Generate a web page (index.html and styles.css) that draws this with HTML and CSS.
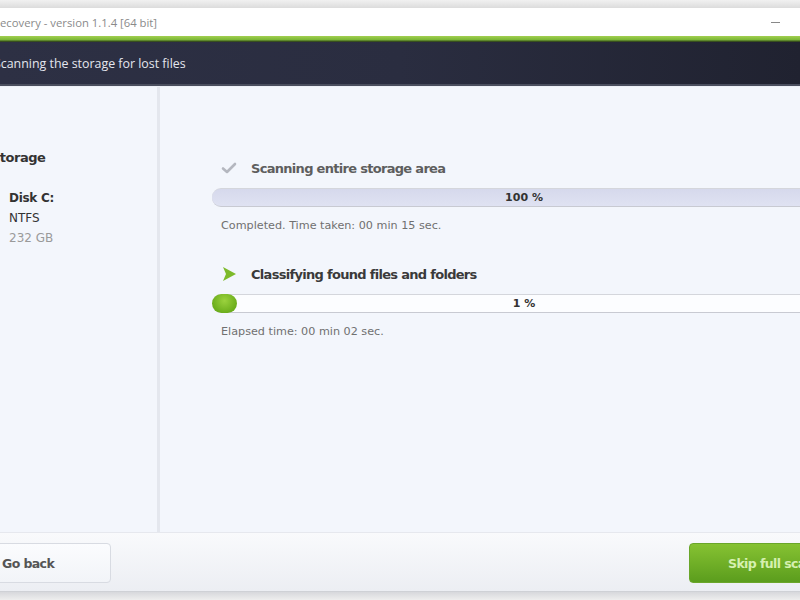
FILE: index.html
```html
<!DOCTYPE html>
<html lang="en">
<head>
  <meta charset="UTF-8">
  <title>Recovery</title>
  <link rel="stylesheet" href="styles.css">
</head>
<body>
  <div id="window">
    <div class="frame-top"></div>

    <div class="titlebar">
      <span class="title">Recovery - version 1.1.4 [64 bit]</span>
      <span class="minimize"></span>
    </div>
    <div class="accent"></div>

    <div class="header">
      <h1>Scanning the storage for lost files</h1>
    </div>

    <div class="main">
      <div class="sidebar">
        <h2>Storage</h2>
        <div class="disk">
          <b>Disk C:</b>
          <span>NTFS</span>
          <span class="size">232 GB</span>
        </div>
      </div>

      <div class="content">
        <div class="step done">
          <div class="step-head">
            <svg class="icon" width="16" height="12" viewBox="0 0 16 12">
              <path d="M2 6.5 L6 10 L14 2" fill="none" stroke="#b4b7bf" stroke-width="2.6" stroke-linecap="round" stroke-linejoin="round"/>
            </svg>
            <h3>Scanning entire storage area</h3>
          </div>
          <div class="bar full"><span>100 %</span></div>
          <p>Completed. Time taken: 00 min 15 sec.</p>
        </div>

        <div class="step active">
          <div class="step-head">
            <svg class="icon" width="16" height="16" viewBox="0 0 16 16">
              <path d="M2 1 L15 8 L2 15 L5 8 Z" fill="#7dba2a"/>
            </svg>
            <h3>Classifying found files and folders</h3>
          </div>
          <div class="bar"><i class="fill"></i><span>1 %</span></div>
          <p>Elapsed time: 00 min 02 sec.</p>
        </div>
      </div>
    </div>

    <div class="footer">
      <button class="btn back">Go back</button>
      <button class="btn skip">Skip full scan</button>
    </div>
    <div class="frame-bottom"></div>
  </div>
</body>
</html>
```

FILE: styles.css
```css
*{
  margin: 0;
  padding: 0;
  box-sizing: border-box;
}

body{
  width: 800px;
  height: 600px;
  overflow: hidden;
  background: #e9e9ea;
  font-family: "DejaVu Sans", Verdana, sans-serif;
}

#window{
  display: flex;
  flex-direction: column;
  height: 600px;
}

.frame-top{
  height: 8px;
  background: linear-gradient(#f1f1f1, #dcdcdc);
}

.titlebar{
  height: 28px;
  background: #fff;
  display: flex;
  align-items: center;
  justify-content: space-between;
  padding: 0 20px 0 0;
}
.title{
  margin-left: -7px;
  font-family: "Open Sans", sans-serif;
  font-size: 11.3px;
  color: #8a8a8a;
}
.minimize{
  width: 9px;
  height: 1px;
  background: #888;
}

.accent{
  height: 6px;
  background: linear-gradient(#a3d050, #7db837 60%, #263318);
}

.header{
  height: 44px;
  display: flex;
  align-items: center;
  background: linear-gradient(90deg, #2d3044, #2a2d40 50%, #202230);
  border-bottom: 2px solid #4a4e5e;
}
.header h1{
  margin-left: -6px;
  padding-top: 1px;
  font-family: "Open Sans", sans-serif;
  font-weight: normal;
  font-size: 12.4px;
  color: #e4e6ee;
}

.main{
  flex: 1;
  display: flex;
  background: #f3f6fc;
  border-top: 1px solid #eceff6;
}

.sidebar{
  width: 160px;
  flex-shrink: 0;
  border-right: 3px solid #e4e7ee;
  padding-top: 63px;
}
.sidebar h2{
  margin-left: -9px;
  font-size: 13px;
  font-weight: bold;
  color: #333;
  letter-spacing: -0.5px;
}
.disk{
  display: flex;
  flex-direction: column;
  gap: 5px;
  margin: 26px 0 0 9px;
  font-size: 12px;
  line-height: 15px;
  color: #333;
}
.disk b{
  color: #333;
  letter-spacing: -0.3px;
}
.disk .size{
  color: #9a9a9a;
}

.content{
  flex: 1;
  padding: 71px 0 0 52px;
  min-width: 0;
}

.step{
  width: 624px;
  margin-bottom: 32px;
}
.step-head{
  display: flex;
  align-items: center;
  height: 20px;
}
.icon{
  margin: 0 14px 0 9px;
  flex-shrink: 0;
}
.step-head h3{
  font-size: 13px;
  font-weight: bold;
  color: #5e5e5e;
  letter-spacing: -0.7px;
}
.step.active h3{
  color: #3a3a3a;
}

.bar{
  position: relative;
  height: 19px;
  margin-top: 10px;
  border-radius: 9px 0 0 9px;
  border-top: 1px solid #d4d6dc;
  border-bottom: 1px solid #c8cad2;
  background: #fcfdff;
  display: flex;
  align-items: center;
  justify-content: center;
}
.bar.full{
  background: linear-gradient(#d6d9ec, #dfe2f2);
}
.bar span{
  position: relative;
  font-size: 11px;
  font-weight: bold;
  color: #333;
}
.fill{
  position: absolute;
  left: 0;
  top: -1px;
  width: 25px;
  height: 19px;
  border-radius: 10px;
  background: radial-gradient(ellipse at 50% 35%, #9bd23e, #6cae1c 70%);
}

.step p{
  margin: 12px 0 0 9px;
  font-size: 11.2px;
  color: #707070;
}

.footer{
  height: 60px;
  flex-shrink: 0;
  display: flex;
  align-items: center;
  justify-content: space-between;
  background: linear-gradient(#f9fafc, #eceef3);
  border-top: 1px solid #e6e8ee;
  border-bottom: 1px solid #cfd1d6;
}
.btn{
  height: 40px;
  margin-top: 2px;
  font-family: "DejaVu Sans", Verdana, sans-serif;
  font-size: 12.5px;
  font-weight: bold;
  border-radius: 4px;
  letter-spacing: -0.6px;
}
.back{
  width: 122px;
  margin-left: -11px;
  padding-left: 12px;
  text-align: left;
  color: #555;
  background: linear-gradient(#fbfcfe, #f2f4f8);
  border: 1px solid #d8dbe2;
}
.skip{
  width: 140px;
  margin-right: -29px;
  padding-left: 38px;
  text-align: left;
  white-space: nowrap;
  color: #d6f0b0;
  background: linear-gradient(#86c232, #5b9d1d);
  border: 1px solid #6aa62a;
}

.frame-bottom{
  height: 8px;
  background: linear-gradient(#d7d8dc, #eeeeee);
}
```
